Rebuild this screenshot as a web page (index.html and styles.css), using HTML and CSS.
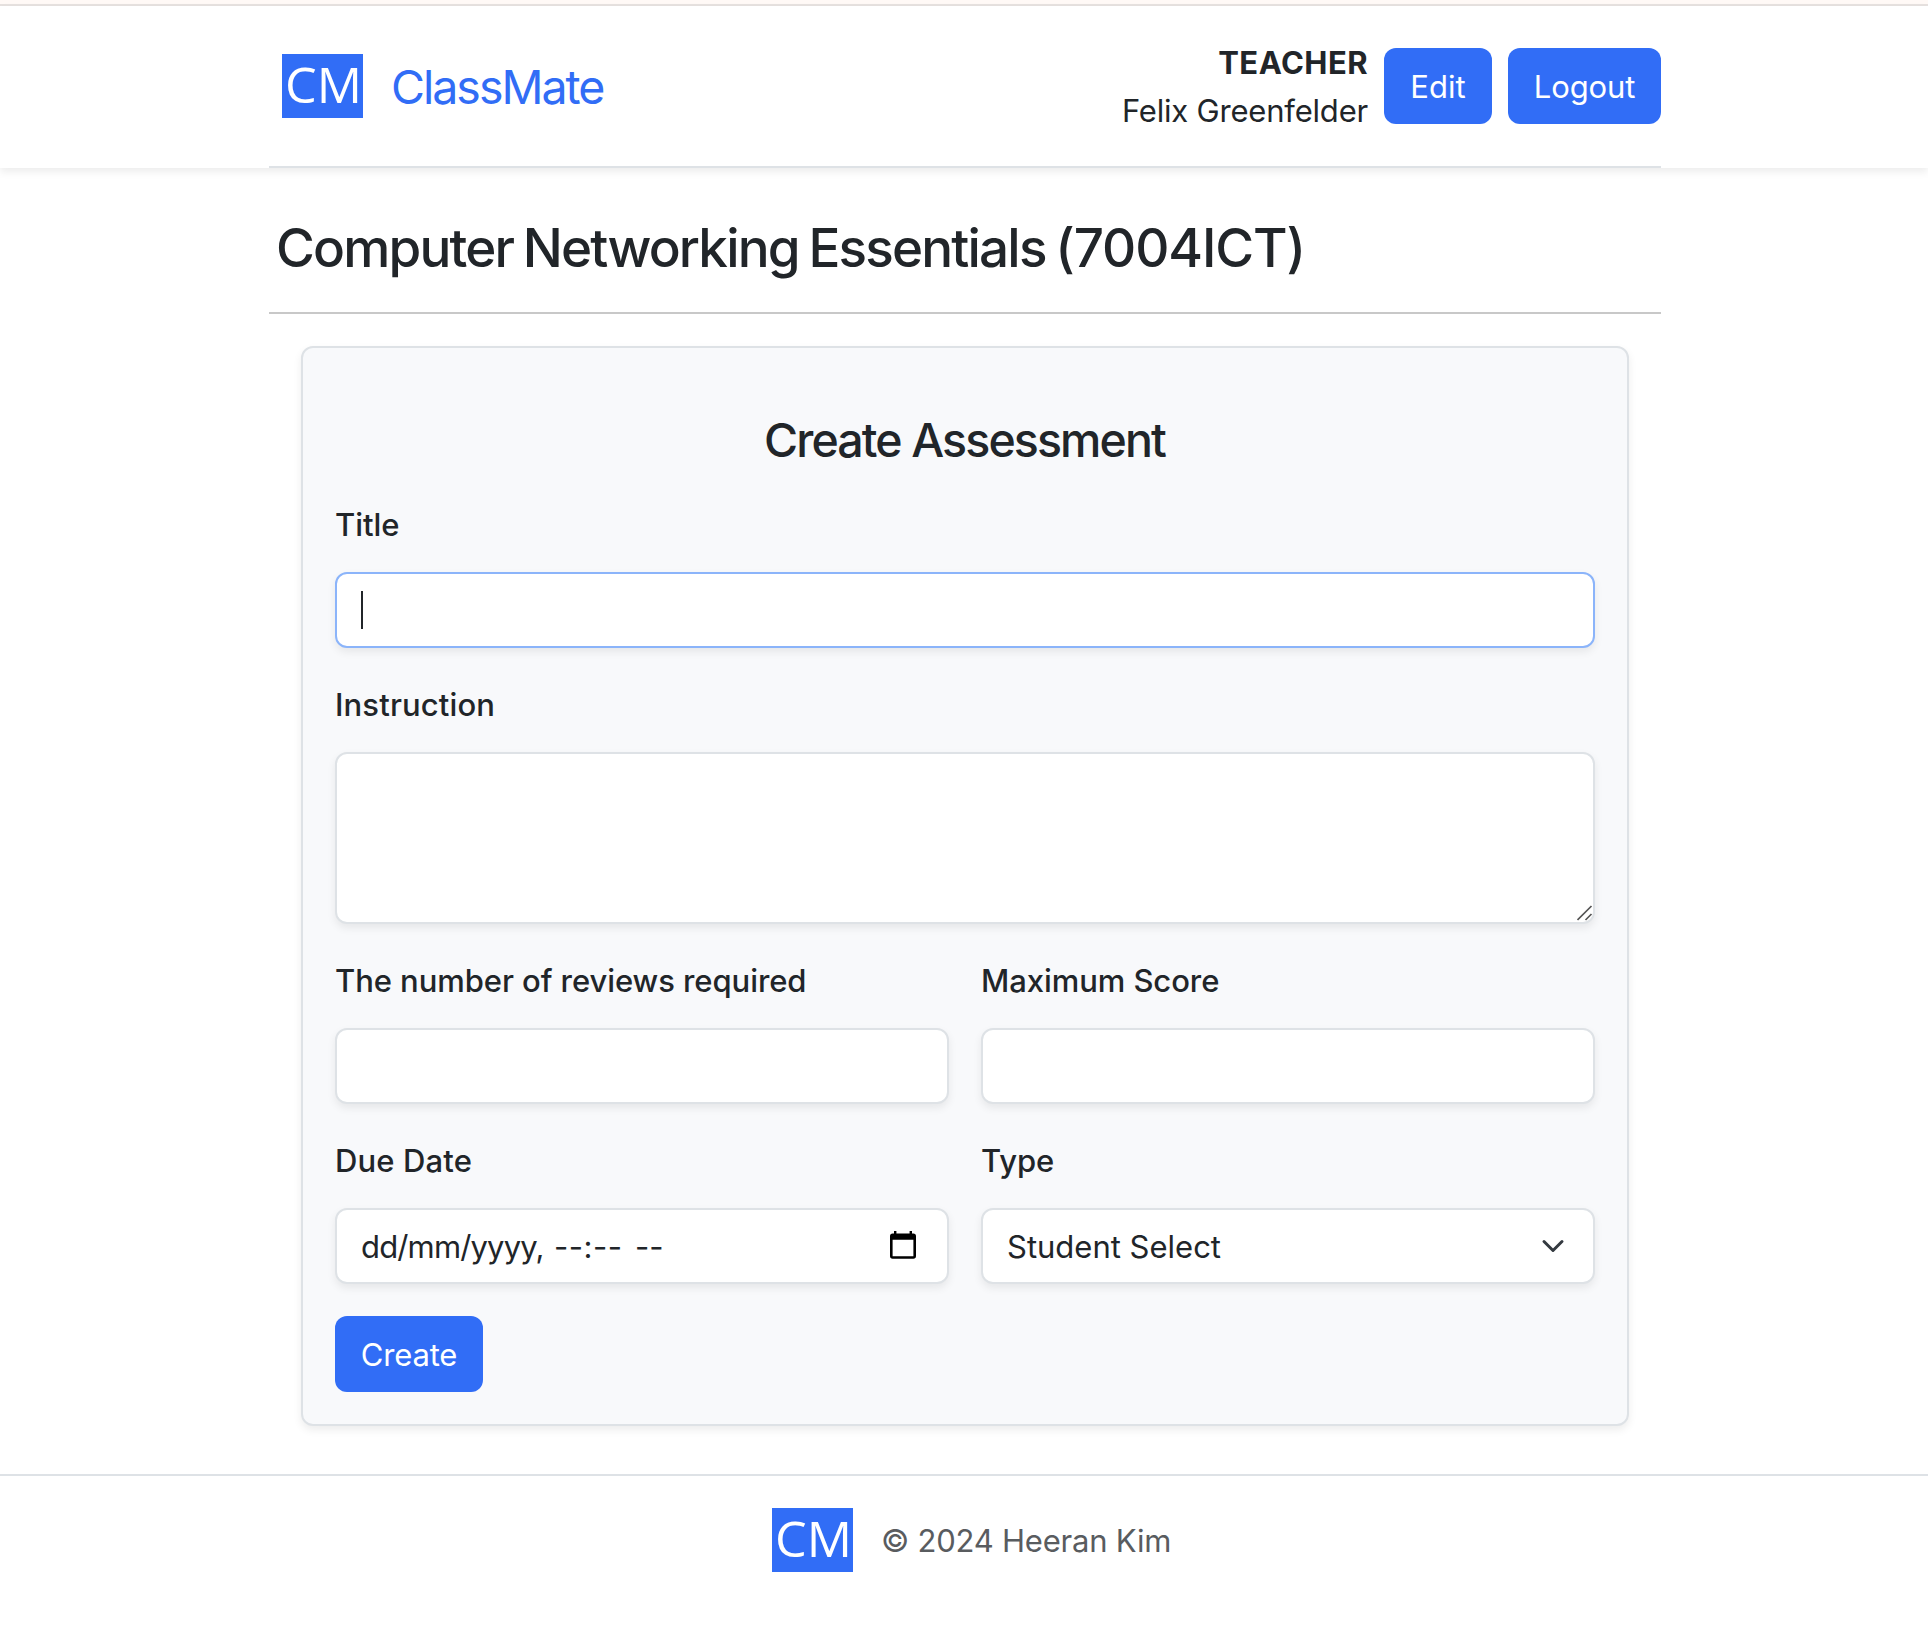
FILE: index.html
```html
<!DOCTYPE html>
<html lang="en">
<head>
<meta charset="utf-8">
<title>ClassMate</title>
<link rel="stylesheet" href="styles.css">
</head>
<body>
<div class="top-edge"></div>
<header class="site-header">
  <div class="container header-row">
    <a class="brand">
      <svg class="logo" viewBox="0 0 81 64" width="81" height="64"><rect width="81" height="64" fill="#316df6"/><text class="logo-text" x="3" y="49" textLength="77" lengthAdjust="spacingAndGlyphs">CM</text></svg>
      <span class="brand-name">ClassMate</span>
    </a>
    <div class="user">
      <div class="user-info"><div class="role">TEACHER</div><div class="user-name">Felix Greenfelder</div></div>
      <button class="btn btn-edit">Edit</button>
      <button class="btn btn-logout">Logout</button>
    </div>
  </div>
</header>
<main class="container">
  <h1 class="course">Computer Networking Essentials <span class="code">(7004ICT)</span></h1>
  <form class="card">
    <h2 class="card-title">Create Assessment</h2>
    <div class="field">
      <label class="label">Title</label>
      <div class="control focused"><span class="caret"></span></div>
    </div>
    <div class="field">
      <label class="label label-wide">Instruction</label>
      <div class="control area"><svg class="grip" width="16" height="16" viewBox="0 0 16 16"><path d="M.500 15 14.500 1M8.500 15l6-6" fill="none" stroke="#555" stroke-width="1.700"/></svg></div>
    </div>
    <div class="row">
      <div class="field">
        <label class="label">The number of reviews required</label>
        <div class="control"></div>
      </div>
      <div class="field">
        <label class="label">Maximum Score</label>
        <div class="control"></div>
      </div>
    </div>
    <div class="row">
      <div class="field">
        <label class="label label-wide">Due Date</label>
        <div class="control date">
          <span class="date-day">dd/mm/yyyy,</span><span class="date-time">--:--</span><span class="date-half">--</span>
          <svg class="calendar" width="28" height="30" viewBox="0 0 28 30"><path d="M5 1h2.400v2.600h13.200V1H23v2.600h1.300q2.700 0 2.700 2.700v19.800q0 2.700-2.700 2.700H3.700Q1 28.800 1 26.100V6.300Q1 3.600 3.700 3.600H5ZM3.600 9.700V26.200H24.400V9.700Z" fill="#000" fill-rule="evenodd"/></svg>
        </div>
      </div>
      <div class="field">
        <label class="label">Type</label>
        <div class="control select">
          <span class="option">Student Select</span>
          <svg class="chevron" width="24" height="24" viewBox="0 0 16 16"><path d="m2 5 6 6 6-6" fill="none" stroke="#343a40" stroke-width="2" stroke-linecap="round" stroke-linejoin="round"/></svg>
        </div>
      </div>
    </div>
    <button class="btn btn-create" type="button">Create</button>
  </form>
</main>
<footer class="site-footer">
  <svg class="logo" viewBox="0 0 81 64" width="81" height="64"><rect width="81" height="64" fill="#316df6"/><text class="logo-text" x="3" y="49" textLength="77" lengthAdjust="spacingAndGlyphs">CM</text></svg>
  <span class="copyright">© 2024 Heeran Kim</span>
</footer>
</body>
</html>
```
FILE: styles.css
```css
* { box-sizing: border-box; }
body {
  margin: 0;
  background: #fff;
  color: #212529;
  font: 400 31px/48px Inter, "Liberation Sans", sans-serif;
}
h1, h2 { margin: 0; font-weight: 500; }
.container { width: 1394px; margin: 0 auto; padding-left: 2px; }

.top-edge { height: 6px; background: #fff9f6; border-bottom: 2px solid #e6e1df; }
.site-header { box-shadow: 0 4px 8px rgba(0, 0, 0, .075); }
.header-row {
  display: flex;
  justify-content: space-between;
  align-items: center;
  height: 162px;
  background: linear-gradient(#dee2e6, #dee2e6) right bottom / 1392px 2px no-repeat;
  padding-bottom: 2px;
}
.brand { display: flex; align-items: center; gap: 28px; padding-left: 13px; }
.logo { display: block; flex: none; overflow: visible; }
.logo-text { font: 400 49px "Open Sans", sans-serif; fill: #fff; }
.brand-name { padding-top: 1px; color: #316df6; font-size: 46.5px; letter-spacing: -2px; }
.user { display: flex; align-items: center; gap: 16px; white-space: nowrap; }
.user-info { padding-top: 2px; text-align: right; line-height: 48px; }
.role { font-weight: 700; letter-spacing: .45px; }
.user-name { letter-spacing: -.2px; }
.btn {
  display: block;
  height: 76px;
  padding: 2px 0 0;
  border: 0;
  border-radius: 12px;
  background: #316df6;
  color: #fff;
  font: inherit;
  letter-spacing: -.15px;
}
.btn-edit { width: 108px; letter-spacing: .1px; }
.btn-logout { width: 153px; }
.btn-create { width: 148px; }

.course {
  height: 146px;
  padding: 47px 0 0 7px;
  border-bottom: 2px solid #c8c8c8;
  font-size: 53px;
  line-height: 67px;
  letter-spacing: -1.83px;
  word-spacing: -2.6px;
  white-space: nowrap;
}
.code { letter-spacing: -1.1px; }
.card {
  display: flex;
  flex-direction: column;
  gap: 32px;
  height: 1080px;
  margin: 32px 32px 0;
  padding: 63px 32px 32px;
  border: 2px solid #dee2e6;
  border-radius: 12px;
  background: #f8f9fb;
  box-shadow: 0 4px 8px rgba(0, 0, 0, .075);
}
.card-title { height: 57px; font-size: 46.5px; line-height: 59px; letter-spacing: -1.9px; text-indent: -1px; text-align: center; }
.row { display: grid; grid-template-columns: 1fr 1fr; gap: 32px; }
.label { display: block; height: 48px; margin-bottom: 24px; line-height: 49px; font-weight: 500; letter-spacing: -.07px; }
.label-wide { letter-spacing: .14px; }
.control {
  display: flex;
  align-items: center;
  position: relative;
  height: 76px;
  padding: 0 24px;
  border: 2px solid #dee2e6;
  border-radius: 12px;
  background: #fff;
  box-shadow: 0 4px 8px rgba(0, 0, 0, .075);
  line-height: 50px;
  white-space: nowrap;
}
.control span:not(.caret) { padding-top: 1px; }
.focused { border-color: #8bb4fa; }
.caret { width: 2px; height: 38px; background: #212529; }
.area { height: 172px; }
.grip { position: absolute; right: 0; bottom: 1px; }
.date-day { width: 193px; letter-spacing: -.85px; }
.date-time { width: 81px; letter-spacing: .5px; }
.calendar { margin: 0 6px 2px auto; }
.select { justify-content: space-between; }
.chevron { margin-right: 4px; }

.site-footer {
  display: flex;
  align-items: center;
  justify-content: center;
  gap: 28px;
  height: 130px;
  margin-top: 48px;
  padding: 0 0 0 15px;
  border-top: 2px solid #dee2e6;
  color: #595c5f;
}
.copyright { padding-top: 1px; letter-spacing: -.22px; }
```
